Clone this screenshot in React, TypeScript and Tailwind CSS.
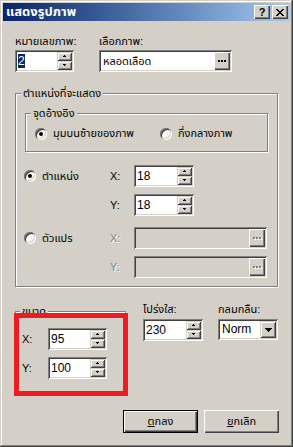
import React from "react";

const sunken =
  "shadow-[inset_1px_1px_0_#808080,inset_-1px_-1px_0_#ffffff,inset_2px_2px_0_#404040,inset_-2px_-2px_0_#d4d0c8]";
const raised =
  "shadow-[inset_1px_1px_0_#d4d0c8,inset_-1px_-1px_0_#404040,inset_2px_2px_0_#ffffff,inset_-2px_-2px_0_#808080]";
const btnRaised =
  "shadow-[inset_1px_1px_0_#ffffff,inset_-1px_-1px_0_#404040,inset_-2px_-2px_0_#808080]";

function UpArrow() {
  return (
    <svg width="5" height="3" viewBox="0 0 5 3" shapeRendering="crispEdges">
      <rect x="2" y="0" width="1" height="1" fill="#000" />
      <rect x="1" y="1" width="3" height="1" fill="#000" />
    </svg>
  );
}
function DownArrow() {
  return (
    <svg width="5" height="3" viewBox="0 0 5 3" shapeRendering="crispEdges">
      <rect x="1" y="0" width="3" height="1" fill="#000" />
      <rect x="2" y="1" width="1" height="1" fill="#000" />
    </svg>
  );
}

function Dots({ disabled = false }: { disabled?: boolean }) {
  return (
    <svg width="9" height="3" viewBox="0 0 9 3" shapeRendering="crispEdges">
      {disabled &&
        [0, 3, 6].map((x) => (
          <rect key={"s" + x} x={x + 1} y={1} width="2" height="2" fill="#ffffff" />
        ))}
      {[0, 3, 6].map((x) => (
        <rect key={x} x={x} y={0} width="2" height="2" fill={disabled ? "#808080" : "#000"} />
      ))}
    </svg>
  );
}

function Spinner({
  value,
  className,
  selected = false,
}: {
  value: string;
  className: string;
  selected?: boolean;
}) {
  return (
    <div className={`flex h-[22px] p-[2px] bg-white ${sunken} ${className}`}>
      <div className="flex-1 pl-[1px] text-[12px] leading-[18px] text-black font-['Liberation_Sans',sans-serif]">
        {selected ? <span className="bg-[#0a246a] text-white">{value}</span> : value}
      </div>
      <div className="flex flex-col w-[15px]">
        <div className={`h-[9px] flex items-center justify-center bg-[#d4d0c8] ${raised}`}>
          <UpArrow />
        </div>
        <div className={`h-[9px] flex items-center justify-center bg-[#d4d0c8] ${raised}`}>
          <DownArrow />
        </div>
      </div>
    </div>
  );
}

function Radio({ checked, label }: { checked: boolean; label: string }) {
  return (
    <div className="flex items-center gap-[6px]">
      <div
        className={`w-[12px] h-[12px] rounded-full bg-white flex items-center justify-center shadow-[inset_1px_1px_0_#808080,inset_-1px_-1px_0_#ffffff,inset_2px_2px_0_#404040,inset_-2px_-2px_0_#d4d0c8]`}
      >
        {checked && <div className="w-[4px] h-[4px] rounded-full bg-black" />}
      </div>
      <span className="leading-[13px]">{label}</span>
    </div>
  );
}

function Group({
  legend,
  className,
  legendLeft,
  children,
}: {
  legend: string;
  className: string;
  legendLeft: string;
  children?: React.ReactNode;
}) {
  return (
    <div
      className={`relative border border-[#808080] shadow-[1px_1px_0_#ffffff,inset_1px_1px_0_#ffffff] ${className}`}
    >
      <span
        className={`absolute -top-[7px] ${legendLeft} px-[2px] bg-[#d4d0c8] leading-[13px]`}
      >
        {legend}
      </span>
      {children}
    </div>
  );
}

function DisabledField({ className }: { className: string }) {
  return (
    <div className={`flex h-[22px] p-[2px] bg-[#d4d0c8] ${sunken} ${className}`}>
      <div className="flex-1" />
      <div className={`w-[16px] flex items-center justify-center bg-[#d4d0c8] ${btnRaised}`}>
        <Dots disabled />
      </div>
    </div>
  );
}

export default function App() {
  return (
    <div
      className="relative w-[293px] h-[447px] bg-[#d4d0c8] p-[3px] text-[11px] text-black font-['Liberation_Sans','Noto_Sans_Thai','Tahoma',sans-serif] shadow-[inset_-1px_-1px_0_#404040,inset_1px_1px_0_#d4d0c8,inset_-2px_-2px_0_#808080,inset_2px_2px_0_#ffffff] overflow-hidden"
    >
      {/* Title bar */}
      <div className="h-[18px] flex items-center bg-gradient-to-r from-[#0a246a] to-[#a6caf0] pl-[3px] pr-[2px]">
        <span className="text-white font-bold text-[13px] leading-[18px]">แสดงรูปภาพ</span>
        <div className="ml-auto flex gap-[2px]">
          <div className={`w-[16px] h-[14px] bg-[#d4d0c8] flex items-center justify-center ${btnRaised}`}>
            <span className="font-bold text-[11px] leading-[11px] font-['Liberation_Sans',sans-serif]">?</span>
          </div>
          <div className={`w-[16px] h-[14px] bg-[#d4d0c8] flex items-center justify-center ${btnRaised}`}>
            <svg width="8" height="7" viewBox="0 0 8 7" shapeRendering="crispEdges">
              {[0, 1, 2, 3, 4, 5, 6].map((i) => (
                <React.Fragment key={i}>
                  <rect x={i} y={i} width="2" height="1" fill="#000" />
                  <rect x={6 - i} y={i} width="2" height="1" fill="#000" />
                </React.Fragment>
              ))}
            </svg>
          </div>
        </div>
      </div>

      {/* Content */}
      <div className="pl-[12px]">
        {/* Row 1 */}
        <div className="flex mt-[14px] gap-[25px]">
          <div className="flex flex-col w-[59px]">
            <span className="leading-[13px] whitespace-nowrap">หมายเลขภาพ:</span>
            <Spinner value="2" selected className="mt-[2px] w-[59px]" />
          </div>
          <div className="flex flex-col w-[133px]">
            <span className="leading-[13px]">เลือกภาพ:</span>
            <div className={`mt-[2px] flex h-[22px] p-[2px] bg-white ${sunken}`}>
              <div className="flex-1 pl-[2px] leading-[18px]">หลอดเลือด</div>
              <div className={`w-[16px] flex items-center justify-center bg-[#d4d0c8] ${btnRaised}`}>
                <Dots />
              </div>
            </div>
          </div>
        </div>

        {/* Position group */}
        <Group legend="ตำแหน่งที่จะแสดง" legendLeft="left-[5px]" className="mt-[21px] w-[263px] h-[194px]">
          <Group
            legend="จุดอ้างอิง"
            legendLeft="left-[5px]"
            className="mt-[19px] ml-[9px] w-[243px] h-[39px]"
          >
            <div className="flex items-center mt-[13px] ml-[9px]">
              <div className="w-[125px]">
                <Radio checked label="มุมบนซ้ายของภาพ" />
              </div>
              <Radio checked={false} label="กึ่งกลางภาพ" />
            </div>
          </Group>

          <div className="ml-[8px] mt-[13px] flex flex-col">
            <div className="flex items-center">
              <div className="w-[86px]">
                <Radio checked label="ตำแหน่ง" />
              </div>
              <span className="w-[24px] leading-[13px]">X:</span>
              <Spinner value="18" className="w-[60px]" />
            </div>
            <div className="flex items-center mt-[7px]">
              <div className="w-[86px]" />
              <span className="w-[24px] leading-[13px]">Y:</span>
              <Spinner value="18" className="w-[60px]" />
            </div>
            <div className="flex items-center mt-[11px]">
              <div className="w-[86px]">
                <Radio checked={false} label="ตัวแปร" />
              </div>
              <span className="w-[24px] leading-[13px] text-[#808080] [text-shadow:1px_1px_0_#ffffff]">X:</span>
              <DisabledField className="w-[133px]" />
            </div>
            <div className="flex items-center mt-[7px]">
              <div className="w-[86px]" />
              <span className="w-[24px] leading-[13px] text-[#808080] [text-shadow:1px_1px_0_#ffffff]">Y:</span>
              <DisabledField className="w-[133px]" />
            </div>
          </div>
        </Group>

        {/* Bottom row */}
        <div className="flex items-start">
          <Group legend="ขนาด" legendLeft="left-[4px]" className="mt-[24px] w-[111px] h-[82px]">
            <div className="flex flex-col mt-[16px] ml-[6px]">
              <div className="flex items-center">
                <span className="w-[26px] leading-[13px]">X:</span>
                <Spinner value="95" className="w-[59px]" />
              </div>
              <div className="flex items-center mt-[7px]">
                <span className="w-[26px] leading-[13px]">Y:</span>
                <Spinner value="100" className="w-[59px]" />
              </div>
            </div>
          </Group>

          <div className="ml-[17px] mt-[16px] flex flex-col">
            <span className="leading-[13px]">โปร่งใส:</span>
            <Spinner value="230" className="mt-[3px] w-[60px]" />
          </div>

          <div className="ml-[15px] mt-[16px] flex flex-col">
            <span className="leading-[13px]">กลมกลืน:</span>
            <div className={`mt-[3px] flex h-[21px] w-[60px] p-[2px] bg-white ${sunken}`}>
              <div className="flex-1 pl-[2px] leading-[17px] text-[12px] font-['Liberation_Sans',sans-serif]">
                Norm
              </div>
              <div className={`w-[16px] flex items-center justify-center bg-[#d4d0c8] ${raised}`}>
                <svg width="7" height="4" viewBox="0 0 7 4" shapeRendering="crispEdges">
                  <rect x="0" y="0" width="7" height="1" fill="#000" />
                  <rect x="1" y="1" width="5" height="1" fill="#000" />
                  <rect x="2" y="2" width="3" height="1" fill="#000" />
                  <rect x="3" y="3" width="1" height="1" fill="#000" />
                </svg>
              </div>
            </div>
          </div>
        </div>

        {/* Buttons */}
        <div className="flex mt-[17px] ml-[108px] gap-[6px]">
          <div className="w-[75px] h-[23px] border border-black">
            <div className={`w-full h-full flex items-center justify-center bg-[#d4d0c8] ${btnRaised}`}>
              <span className="leading-[13px]">
                <span className="underline">ต</span>กลง
              </span>
            </div>
          </div>
          <div className={`w-[75px] h-[23px] flex items-center justify-center bg-[#d4d0c8] ${btnRaised}`}>
            <span className="leading-[13px]">
              <span className="underline">ย</span>กเลิก
            </span>
          </div>
        </div>
      </div>

      {/* Red highlight overlay */}
      <div className="absolute left-[14px] top-[313px] w-[114px] h-[83px] border-[5px] border-[#ed1c24]" />
    </div>
  );
}
